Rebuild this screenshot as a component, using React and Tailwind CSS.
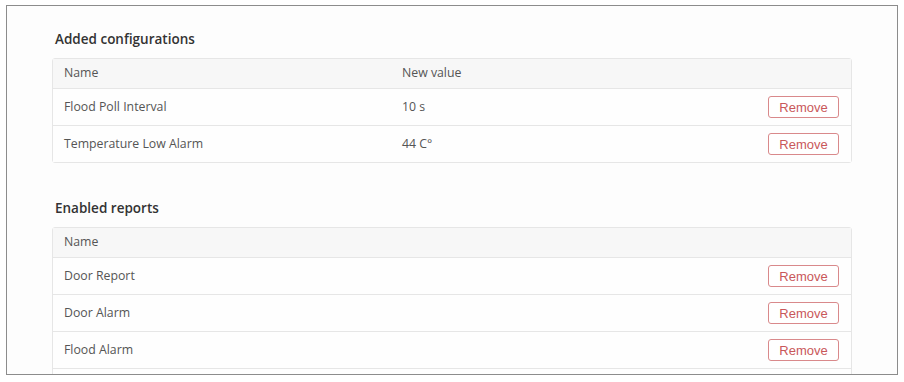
import React from 'react';

const configs = [
  { name: 'Flood Poll Interval', value: '10 s' },
  { name: 'Temperature Low Alarm', value: '44 C°' },
];

const reports = ['Door Report', 'Door Alarm', 'Flood Alarm'];

const RemoveButton = () => (
  <button
    className="h-[22px] w-[71px] rounded-[3px] border border-[#d9898b] bg-white text-[13px] leading-none text-[#c9585b]"
    style={{ fontFamily: '"Liberation Sans", Arial, sans-serif' }}
  >
    Remove
  </button>
);

const App = () => {
  return (
    <div className="h-[382px] w-[904px] bg-white pl-[6px] pt-[5px]" style={{ fontFamily: '"Open Sans", sans-serif' }}>
      <div className="h-[370px] w-[892px] overflow-hidden border border-[#8c8c8c] bg-[#fdfdfd] pl-[45px] pt-[23px]">
        {/* Added configurations */}
        <h2 className="mb-[9px] ml-[3px] h-[20px] text-[13.5px] font-semibold leading-[20px] text-[#333]">Added configurations</h2>
        <div className="w-[800px] rounded-[3px] border border-[#e6e6e6] text-[12.3px] text-[#555]">
          <div className="flex h-[29px] items-center bg-[#f7f7f7]">
            <div className="w-[337px] pl-[11px]">Name</div>
            <div className="pl-[12px]">New value</div>
          </div>
          {configs.map((c, i) => (
            <div key={i} className="flex h-[37px] items-center border-t border-[#e6e6e6] bg-[#fefefe]">
              <div className="w-[337px] pl-[11px]">{c.name}</div>
              <div className="flex-1 pl-[12px]">{c.value}</div>
              <div className="pr-[12px]"><RemoveButton /></div>
            </div>
          ))}
        </div>

        {/* Enabled reports */}
        <h2 className="mb-[9px] ml-[3px] mt-[35px] h-[20px] text-[13.5px] font-semibold leading-[20px] text-[#333]">Enabled reports</h2>
        <div className="w-[800px] rounded-[3px] border border-[#e6e6e6] text-[12.3px] text-[#555]">
          <div className="flex h-[29px] items-center bg-[#f7f7f7]">
            <div className="pl-[11px]">Name</div>
          </div>
          {reports.map((r, i) => (
            <div key={i} className="flex h-[37px] items-center border-t border-[#e6e6e6] bg-[#fefefe]">
              <div className="flex-1 pl-[11px]">{r}</div>
              <div className="pr-[12px]"><RemoveButton /></div>
            </div>
          ))}
          <div className="h-[37px] border-t border-[#e6e6e6] bg-[#fefefe]" />
        </div>
      </div>
    </div>
  );
};

export default App;
